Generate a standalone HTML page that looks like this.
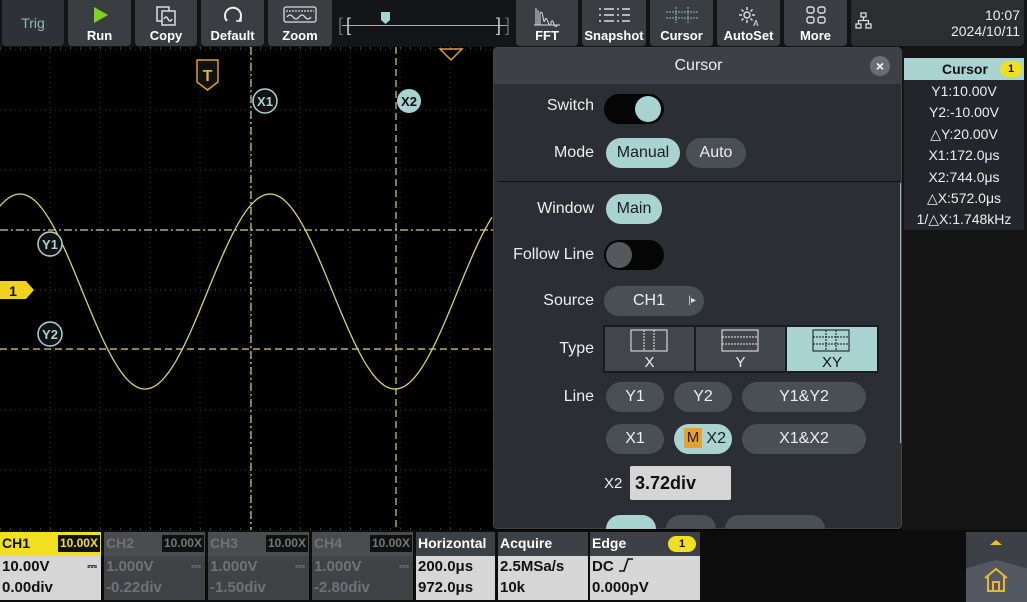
<!DOCTYPE html>
<html><head><meta charset="utf-8">
<style>
*{margin:0;padding:0;box-sizing:border-box}
body{width:1027px;height:602px;background:#000;position:relative;overflow:hidden;font-family:"Liberation Sans",sans-serif;color:#fff}
.abs{position:absolute}
.btn{position:absolute;top:0;height:46px;background:#3a3d42;border-radius:0 0 4px 4px;text-align:center;font-weight:bold;font-size:13px;color:#fff}
.btn .lb{position:absolute;bottom:3px;left:0;right:0}
.btn svg{position:absolute;left:50%;top:5px;transform:translateX(-50%)}
.lab{position:absolute;font-size:16px;color:#eee;text-align:right;width:100px}
.pill{position:absolute;height:30px;border-radius:15px;background:#4a4e55;color:#eee;font-size:16px;text-align:center;line-height:30px}
.pill.on{background:#a9d3d1;color:#1b1d20}
.ch{position:absolute;top:532px;height:68px}
.ch .h{height:24px;font-weight:bold;font-size:14px;line-height:22px;padding-left:2px;position:relative}
.ch .v{font-weight:bold;font-size:15px;line-height:21px;padding-left:2px}
</style></head><body>
<!-- top bar -->
<div class="abs" style="left:0;top:0;width:1027px;height:47px;background:#121314"></div>
<div class="btn" style="left:2px;width:62px;background:#2f3236"><div style="line-height:46px;font-weight:normal;font-size:14px;color:#8fb9b7">Trig</div></div>
<div class="btn" style="left:68px;width:63px"><svg width="20" height="20"><polygon points="4,2 18,10 4,18" fill="#7ed321"/></svg><div class="lb">Run</div></div>
<div class="btn" style="left:135px;width:62px"><svg width="24" height="22" fill="none" stroke="#ddd" stroke-width="1.5"><rect x="3" y="2" width="12" height="14"/><rect x="8" y="6" width="13" height="14" fill="#3a3d42"/><path d="M10 14q2-4 4 0t4 0"/></svg><div class="lb">Copy</div></div>
<div class="btn" style="left:201px;width:63px"><svg width="24" height="22" fill="none" stroke="#eee" stroke-width="2"><path d="M18 16A8 8 0 1 0 6 16"/><path d="M15 16h5v-4" stroke-width="1.5"/></svg><div class="lb">Default</div></div>
<div class="btn" style="left:268px;width:64px"><svg width="34" height="20" fill="none" stroke="#ddd" stroke-width="1.3"><rect x="1" y="2" width="32" height="15" rx="2"/><path d="M3 6h28" stroke-dasharray="2 1"/><path d="M4 12q3-4 6 0t6 0t6 0t6 0"/></svg><div class="lb">Zoom</div></div>
<div class="abs" style="left:335px;top:0;width:178px;height:46px;background:#141516"></div>
<div class="abs" style="left:342px;top:25px;width:166px;height:1px;background:#aaa"></div>
<div class="abs" style="left:338px;top:16px;font-size:18px;color:#666;line-height:18px">[</div>
<div class="abs" style="left:346px;top:16px;font-size:18px;color:#ccc;line-height:18px">[</div>
<div class="abs" style="left:496px;top:16px;font-size:18px;color:#ccc;line-height:18px">]</div>
<div class="abs" style="left:505px;top:16px;font-size:18px;color:#666;line-height:18px">]</div>
<svg class="abs" style="left:381px;top:12px" width="9" height="12"><path d="M0 0h9v8l-4.5 4L0 8z" fill="#a9d3d1"/></svg>
<div class="btn" style="left:516px;width:62px"><svg width="30" height="22" fill="none" stroke="#ddd" stroke-width="1"><path d="M2 20h26M4 20V3M6 20V5M8 20V8q2-3 3 4t2 3t3 2t3 1t3 1t3 1"/></svg><div class="lb">FFT</div></div>
<div class="btn" style="left:582px;width:64px"><svg width="36" height="20" stroke="#ddd" stroke-width="1.5"><path d="M3 4h2M3 10h2M3 16h2M8 4h10M8 10h10M8 16h10M21 4h2M21 10h2M21 16h2M26 4h8M26 10h8M26 16h8"/></svg><div class="lb">Snapshot</div></div>
<div class="btn" style="left:650px;width:63px"><svg width="34" height="20" stroke="#8fb9b7" stroke-width="1" stroke-dasharray="2 1"><path d="M1 7h32M1 13h32M11 2v16M23 2v16"/></svg><div class="lb">Cursor</div></div>
<div class="btn" style="left:717px;width:63px"><svg width="26" height="22" fill="none" stroke="#ddd" stroke-width="1.5"><circle cx="11" cy="10" r="3"/><path d="M11 2v3M11 15v3M3 10h3M16 10h3M5.5 4.5l2 2M14.5 13.5l2 2M16.5 4.5l-2 2M5.5 15.5l2-2"/><text x="17" y="21" font-size="8" fill="#a9d3d1" stroke="none" font-family="Liberation Sans" font-weight="bold">A</text></svg><div class="lb">AutoSet</div></div>
<div class="btn" style="left:784px;width:63px"><svg width="22" height="20" fill="none" stroke="#ddd" stroke-width="1.4"><rect x="2" y="2" width="7" height="6" rx="2"/><rect x="13" y="2" width="7" height="6" rx="2"/><rect x="2" y="12" width="7" height="6" rx="2"/><rect x="13" y="12" width="7" height="6" rx="2"/></svg><div class="lb">More</div></div>
<div class="abs" style="left:851px;top:0;width:173px;height:46px;background:#2b2d31;border-radius:0 0 4px 4px"></div>
<svg class="abs" style="left:855px;top:12px" width="18" height="18" fill="none" stroke="#ddd" stroke-width="1.3"><rect x="6" y="1" width="5" height="4"/><rect x="1" y="12" width="5" height="4"/><rect x="11" y="12" width="5" height="4"/><path d="M8.5 5v3.5M3.5 12V8.5h10V12"/></svg>
<div class="abs" style="left:920px;top:7px;width:100px;text-align:right;font-size:14px;line-height:16px;color:#eee">10:07<br>2024/10/11</div>

<!-- scope -->
<svg class="abs" style="left:0;top:47px" width="905" height="484">
<g stroke="#3a3a3a" stroke-width="1" stroke-dasharray="1 4">
<path d="M0 3h905M0 63h905M0 123h905M0 183h905M0 303h905M0 363h905M0 423h905"/>
<path d="M50 0v484M100 0v484M150 0v484M200 0v484M300 0v484M350 0v484M400 0v484M450 0v484"/>
</g>
<path d="M0 243h905M250 0v484" stroke="#555" stroke-dasharray="1 4"/>
<path d="M0 1h490" stroke="#888" stroke-dasharray="1 9"/>
<path d="M0 482h490" stroke="#777" stroke-dasharray="1 9"/>
<polyline id="sine" fill="none" stroke="#d8d070" stroke-width="1.3" points=""/>
<path d="M0 183h493" stroke="#d8d080" stroke-width="1.2" stroke-dasharray="8 3 2 3"/>
<path d="M0 302h493" stroke="#d8d080" stroke-width="1.2" stroke-dasharray="7 4"/>
<path d="M251 0v484" stroke="#d8d080" stroke-width="1.2" stroke-dasharray="8 3 2 3"/>
<path d="M396 0v484" stroke="#d8d080" stroke-width="1.2" stroke-dasharray="7 4"/>
<path d="M440 2h22l-11 11z" fill="none" stroke="#d8a030" stroke-width="1.5"/>
<path d="M197 13h21v22l-10.5 8L197 35z" fill="#111" stroke="#d8a030" stroke-width="1.5"/>
<text x="207.5" y="34" fill="#e0b040" font-size="16" font-weight="bold" text-anchor="middle" font-family="Liberation Sans">T</text>
<circle cx="265" cy="54" r="12" fill="#111" stroke="#a9d3d1" stroke-width="1.5"/>
<text x="265" y="59" fill="#a9d3d1" font-size="13" font-weight="bold" text-anchor="middle" font-family="Liberation Sans">X1</text>
<circle cx="409" cy="54" r="12" fill="#a9d3d1"/>
<text x="409" y="59" fill="#111" font-size="13" font-weight="bold" text-anchor="middle" font-family="Liberation Sans">X2</text>
<circle cx="50" cy="197" r="12" fill="#111" stroke="#a9d3d1" stroke-width="1.5"/>
<text x="50" y="202" fill="#a9d3d1" font-size="13" font-weight="bold" text-anchor="middle" font-family="Liberation Sans">Y1</text>
<circle cx="50" cy="287" r="12" fill="#111" stroke="#a9d3d1" stroke-width="1.5"/>
<text x="50" y="292" fill="#a9d3d1" font-size="13" font-weight="bold" text-anchor="middle" font-family="Liberation Sans">Y2</text>
<path d="M0 234h26l8 9l-8 9H0z" fill="#f0d020"/>
<text x="13" y="249" fill="#111" font-size="14" font-weight="bold" text-anchor="middle" font-family="Liberation Sans">1</text>
</svg>
<script>
var p=[];for(var x=0;x<=493;x+=2){p.push(x+","+(244.5-97.5*Math.cos(2*Math.PI*(x-20)/250)).toFixed(1));}
document.getElementById('sine').setAttribute('points',p.join(' '));
</script>

<!-- right info panel -->
<div class="abs" style="left:902px;top:47px;width:125px;height:484px;background:#151515"></div>
<div class="abs" style="left:904px;top:58px;width:120px;height:22px;background:#a9d3d1;color:#111;font-weight:bold;font-size:14px;line-height:22px;padding-left:38px">Cursor<span style="position:absolute;left:96px;top:3px;width:22px;height:16px;border-radius:8px;background:#f0e020;font-size:11px;line-height:16px;text-align:center">1</span></div>
<div class="abs" style="left:904px;top:80px;width:120px;height:150px;background:#23262a;font-size:14px;line-height:21.4px;text-align:center;color:#eee;padding-top:1px">Y1:10.00V<br>Y2:-10.00V<br>△Y:20.00V<br>X1:172.0μs<br>X2:744.0μs<br>△X:572.0μs<br>1/△X:1.748kHz</div>

<!-- dialog -->
<div class="abs" style="left:493px;top:47px;width:409px;height:482px;background:#2b2e33;border:1px solid #444;border-radius:4px;overflow:hidden">
 <div class="abs" style="left:0;top:0;width:409px;height:36px;background:#3d4045;text-align:center;line-height:36px;font-size:16px;color:#eee">Cursor</div>
 <div class="abs" style="left:376px;top:8px;width:20px;height:20px;border-radius:10px;background:#6a6e74;color:#fff;font-size:14px;font-weight:bold;text-align:center;line-height:20px">×</div>
 <div class="abs" style="left:4px;top:133px;width:402px;height:1px;background:#111"></div>
 <div class="abs" style="left:406px;top:135px;width:2px;height:260px;background:#8fb9b7"></div>
</div>
<div class="lab" style="left:494px;top:97px">Switch</div>
<div class="abs" style="left:604px;top:94px;width:60px;height:30px;border-radius:15px;background:#050505"></div>
<div class="abs" style="left:635px;top:96px;width:26px;height:26px;border-radius:13px;background:#a9d3d1"></div>
<div class="lab" style="left:494px;top:144px">Mode</div>
<div class="pill on" style="left:606px;top:138px;width:74px">Manual</div>
<div class="pill" style="left:686px;top:138px;width:60px">Auto</div>
<div class="lab" style="left:494px;top:200px">Window</div>
<div class="pill on" style="left:606px;top:194px;width:56px">Main</div>
<div class="lab" style="left:494px;top:246px">Follow Line</div>
<div class="abs" style="left:604px;top:240px;width:60px;height:30px;border-radius:15px;background:#050505"></div>
<div class="abs" style="left:606px;top:242px;width:26px;height:26px;border-radius:13px;background:#55595f"></div>
<div class="lab" style="left:494px;top:292px">Source</div>
<div class="pill" style="left:604px;top:286px;width:100px;padding-right:10px">CH1<span style="position:absolute;right:8px;top:0;font-size:10px;color:#ddd">|▸</span></div>
<div class="lab" style="left:494px;top:340px">Type</div>
<div class="abs" style="left:603px;top:325px;width:276px;height:48px;background:#1a1c1f"></div>
<div class="abs" style="left:605px;top:327px;width:89px;height:44px;background:#43464b"></div>
<div class="abs" style="left:696px;top:327px;width:89px;height:44px;background:#43464b"></div>
<div class="abs" style="left:787px;top:327px;width:90px;height:44px;background:#a9d3d1"></div>
<svg class="abs" style="left:630px;top:329px" width="40" height="24" fill="none" stroke="#eee" stroke-width="1"><rect x="1" y="1" width="36" height="21"/><path d="M14 1v21M24 1v21" stroke-dasharray="2 1"/></svg>
<svg class="abs" style="left:721px;top:329px" width="40" height="24" fill="none" stroke="#eee" stroke-width="1"><rect x="1" y="1" width="36" height="21"/><path d="M1 8h36M1 15h36" stroke-dasharray="2 1"/></svg>
<svg class="abs" style="left:812px;top:329px" width="40" height="24" fill="none" stroke="#111" stroke-width="1"><rect x="1" y="1" width="36" height="21"/><path d="M1 8h36M1 15h36M14 1v21M24 1v21" stroke-dasharray="2 1"/></svg>
<div class="abs" style="left:605px;top:354px;width:89px;text-align:center;font-size:15px;color:#eee">X</div>
<div class="abs" style="left:696px;top:354px;width:89px;text-align:center;font-size:15px;color:#eee">Y</div>
<div class="abs" style="left:787px;top:354px;width:90px;text-align:center;font-size:15px;color:#111">XY</div>
<div class="lab" style="left:494px;top:388px">Line</div>
<div class="pill" style="left:606px;top:382px;width:58px">Y1</div>
<div class="pill" style="left:674px;top:382px;width:58px">Y2</div>
<div class="pill" style="left:742px;top:382px;width:124px">Y1&amp;Y2</div>
<div class="pill" style="left:606px;top:424px;width:58px">X1</div>
<div class="pill on" style="left:674px;top:424px;width:58px;padding-left:4px"><span style="display:inline-block;background:#e8a030;color:#222;width:18px;height:20px;line-height:20px;font-size:15px;vertical-align:1px">M</span> X2</div>
<div class="pill" style="left:742px;top:424px;width:124px">X1&amp;X2</div>
<div class="abs" style="left:604px;top:475px;font-size:15px;color:#eee">X2</div>
<div class="abs" style="left:630px;top:466px;width:101px;height:34px;background:#d6d6d6;border-radius:2px;color:#111;font-weight:bold;font-size:18px;line-height:34px;padding-left:5px">3.72div</div>
<div class="abs" style="left:606px;top:515px;width:50px;height:14px;border-radius:15px 15px 0 0;background:#a9d3d1"></div>
<div class="abs" style="left:666px;top:515px;width:50px;height:14px;border-radius:15px 15px 0 0;background:#4a4e55"></div>
<div class="abs" style="left:725px;top:515px;width:100px;height:14px;border-radius:15px 15px 0 0;background:#4a4e55"></div>

<!-- bottom -->
<div class="abs" style="left:0;top:530px;width:1027px;height:72px;background:#0d0d0d"></div>
<div class="ch" style="left:0;width:101px;background:#d6d6d6;color:#111"><div class="h" style="background:#f0e020">CH1<span style="position:absolute;right:1px;top:3px;background:#111;color:#f0e020;font-size:12px;line-height:17px;padding:0 2px">10.00X</span></div><div class="v">10.00V<span style="float:right;margin-right:4px;font-size:12px">⎓</span><br>0.00div</div></div>
<div class="ch" style="left:104px;width:101px;background:#404246;color:#6f7276"><div class="h" style="background:#4a4c50">CH2<span style="position:absolute;right:1px;top:3px;background:#111;color:#777;font-size:12px;line-height:17px;padding:0 2px">10.00X</span></div><div class="v">1.000V<span style="float:right;margin-right:4px;font-size:12px">⎓</span><br>-0.22div</div></div>
<div class="ch" style="left:208px;width:101px;background:#404246;color:#6f7276"><div class="h" style="background:#4a4c50">CH3<span style="position:absolute;right:1px;top:3px;background:#111;color:#777;font-size:12px;line-height:17px;padding:0 2px">10.00X</span></div><div class="v">1.000V<span style="float:right;margin-right:4px;font-size:12px">⎓</span><br>-1.50div</div></div>
<div class="ch" style="left:312px;width:101px;background:#404246;color:#6f7276"><div class="h" style="background:#4a4c50">CH4<span style="position:absolute;right:1px;top:3px;background:#111;color:#777;font-size:12px;line-height:17px;padding:0 2px">10.00X</span></div><div class="v">1.000V<span style="float:right;margin-right:4px;font-size:12px">⎓</span><br>-2.80div</div></div>
<div class="ch" style="left:416px;width:79px;background:#d6d6d6;color:#111"><div class="h" style="background:#3d4045;color:#fff">Horizontal</div><div class="v">200.0μs<br>972.0μs</div></div>
<div class="ch" style="left:498px;width:90px;background:#d6d6d6;color:#111"><div class="h" style="background:#3d4045;color:#fff">Acquire</div><div class="v">2.5MSa/s<br>10k</div></div>
<div class="ch" style="left:590px;width:110px;background:#d6d6d6;color:#111"><div class="h" style="background:#3d4045;color:#fff">Edge<span style="position:absolute;left:78px;top:4px;width:28px;height:16px;border-radius:8px;background:#f0e020;color:#111;font-size:11px;line-height:16px;text-align:center">1</span></div><div class="v">DC <svg width="16" height="14" style="vertical-align:-1px" fill="none" stroke="#111" stroke-width="1.6"><path d="M1 13h5l4-12h5"/></svg><br>0.000pV</div></div>
<div class="abs" style="left:966px;top:532px;width:61px;height:70px;background:#3d4045"></div>
<div class="abs" style="left:966px;top:560px;width:61px;height:42px;background:#545961;clip-path:polygon(0 20%,50% 0,100% 20%,100% 100%,0 100%)"></div>
<svg class="abs" style="left:988px;top:538px" width="16" height="8"><path d="M2 7l6-5 6 5z" fill="#f0c020"/></svg>
<svg class="abs" style="left:983px;top:566px" width="26" height="28" fill="none" stroke="#e8b830" stroke-width="2"><path d="M2 12L13 3l11 9M5 10v15h16V10M10 25v-9h6v9"/></svg>
</body></html>
